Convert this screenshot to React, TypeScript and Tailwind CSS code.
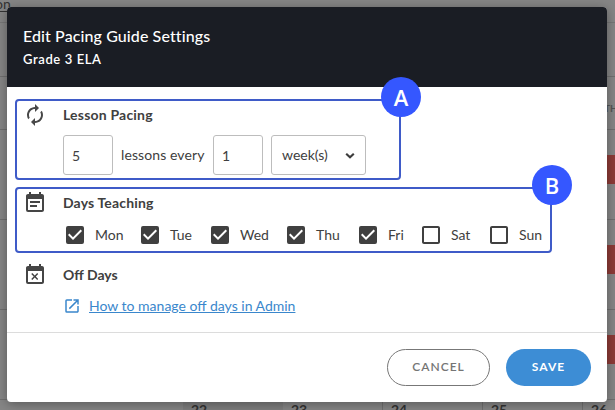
import React from 'react';
import {
    MdAutorenew,
    MdCheckBox,
    MdCheckBoxOutlineBlank,
    MdEventBusy,
    MdEventNote,
    MdOpenInNew,
} from 'react-icons/md';

interface Day {
    label: string;
    checked: boolean;
    width: string;
}

const days: Day[] = [
    { label: 'Mon', checked: true, width: 'w-[75px]' },
    { label: 'Tue', checked: true, width: 'w-[70px]' },
    { label: 'Wed', checked: true, width: 'w-[76px]' },
    { label: 'Thu', checked: true, width: 'w-[72px]' },
    { label: 'Fri', checked: true, width: 'w-[63px]' },
    { label: 'Sat', checked: false, width: 'w-[68px]' },
    { label: 'Sun', checked: false, width: 'w-[60px]' },
];

const lastWeek = [22, 23, 24, 25, 26];

const CalendarBackdrop: React.FC = () => (
    <div className="w-[615px] h-[410px] overflow-hidden bg-[#868686] text-[#333333]">
        <div className="h-[23px] border-b border-[#777777] text-[14px] leading-[8px]">
            <span className="-ml-[5px] underline underline-offset-2">on</span>
        </div>
        <div className="h-[54px] border-b border-[#707070]" />
        <div className="h-[53px] pt-[24px] pl-[604px] border-b border-[#707070] text-[10px] font-bold leading-[14px] text-[#555555]">
            TH
        </div>
        {[0, 1, 2].map((week) => (
            <div key={week} className="h-[90px] pt-[25px] border-b border-[#707070]">
                <div className="ml-[583px] h-[29px] bg-[#8d3b37]" />
            </div>
        ))}
        <div className="flex h-[20px] pl-[183px]">
            {lastWeek.map((date, i) => (
                <div
                    key={date}
                    className={`w-[100px] shrink-0 pt-[2px] pl-[8px] text-[14px] font-bold leading-[16px] border-r ${
                        i === 0 ? 'bg-[#7e7e7e] border-transparent' : 'border-[#707070]'
                    }`}
                >
                    {date}
                </div>
            ))}
        </div>
    </div>
);

const Badge: React.FC<{ letter: string }> = ({ letter }) => (
    <span className="absolute -top-[24px] -right-[22px] size-10 rounded-full bg-[#3557ff] text-white font-['Open_Sans',sans-serif] font-semibold text-[22px] flex items-center justify-center">
        {letter}
    </span>
);

const App: React.FC = () => {
    return (
        <div className="relative w-[615px] h-[410px] overflow-hidden font-['Lato',sans-serif] text-[#404040]">
            <CalendarBackdrop />

            <div className="absolute left-[7px] top-[7px] w-[600px] h-[395px] flex flex-col rounded-[4px] overflow-hidden bg-white shadow-[0_2px_12px_rgba(0,0,0,0.35)]">
                <div className="h-20 shrink-0 bg-[#1a1d24] text-white px-4 pt-[18px]">
                    <h2 className="text-[16px] font-medium leading-[22px] tracking-[0.1px]">Edit Pacing Guide Settings</h2>
                    <p className="text-[13px] font-semibold leading-[18px] mt-[3px] tracking-[0.6px]">Grade 3 ELA</p>
                </div>

                <div className="h-[245px] shrink-0 pl-2 pt-3 text-[14px]">
                    <div className="relative w-[386px] h-[81px] rounded-[4px] border-2 border-[#3f5bc8]">
                        <div className="flex items-center h-[28px] pl-[6px]">
                            <MdAutorenew size={24} className="text-[#484848]" />
                            <h3 className="ml-4 pb-[2px] font-bold tracking-[0.2px]">Lesson Pacing</h3>
                        </div>
                        <div className="flex items-center pl-[46px] pt-[6px]">
                            <div className="w-[50px] h-10 rounded-[3px] border border-[#bdbdbd] flex items-center pl-2">5</div>
                            <span className="w-[100px] pl-2 pb-px whitespace-nowrap tracking-[0.1px]">lessons every</span>
                            <div className="w-[50px] h-10 rounded-[3px] border border-[#bdbdbd] flex items-center pl-2">1</div>
                            <div className="ml-2 w-[95px] h-10 rounded-[3px] border border-[#bdbdbd] flex items-center justify-between pl-[10px] pr-[10px]">
                                <span className="pb-px">week(s)</span>
                                <svg width="10" height="7" viewBox="0 0 10 7" fill="none" stroke="#3d3d3d" strokeWidth="2.2">
                                    <path d="M1.2 1.8L5 5.2l3.8-3.4" />
                                </svg>
                            </div>
                        </div>
                        <Badge letter="A" />
                    </div>

                    <div className="relative mt-[7px] w-[537px] h-[66px] rounded-[4px] border-2 border-[#3f5bc8]">
                        <div className="flex items-center h-[28px] pl-[6px]">
                            <MdEventNote size={24} className="text-[#454545]" />
                            <h3 className="ml-4 pb-[2px] font-bold tracking-[0.15px]">Days Teaching</h3>
                        </div>
                        <div className="flex pl-[46px] pt-[6px]">
                            {days.map((day) => (
                                <label key={day.label} className={`flex items-center gap-2 shrink-0 h-6 ${day.width}`}>
                                    {day.checked ? (
                                        <MdCheckBox size={24} className="shrink-0" />
                                    ) : (
                                        <MdCheckBoxOutlineBlank size={24} className="shrink-0" />
                                    )}
                                    <span className="leading-5">{day.label}</span>
                                </label>
                            ))}
                        </div>
                        <Badge letter="B" />
                    </div>

                    <div className="flex items-center mt-[10px] h-6 pl-2">
                        <MdEventBusy size={24} className="text-[#454545]" />
                        <h3 className="ml-4 pb-[2px] font-bold">Off Days</h3>
                    </div>
                    <div className="flex items-center mt-[9px] h-5 pl-[48px] text-[#3a87cc]">
                        <MdOpenInNew size={18} />
                        <a href="#" className="ml-[8px] pb-[2px] underline whitespace-nowrap">How to manage off days in Admin</a>
                    </div>
                </div>

                <div className="flex justify-end gap-4 h-[70px] border-t border-[#dcdcdc] pt-4 pr-4 text-[12px] tracking-[1px]">
                    <button className="w-[103px] h-[37px] pb-px rounded-full border border-[#777777] font-semibold text-[#757575]">CANCEL</button>
                    <button className="w-[85px] h-[37px] pb-px rounded-full bg-[#3d8dd5] font-bold text-white">SAVE</button>
                </div>
            </div>
        </div>
    );
};

export default App;
